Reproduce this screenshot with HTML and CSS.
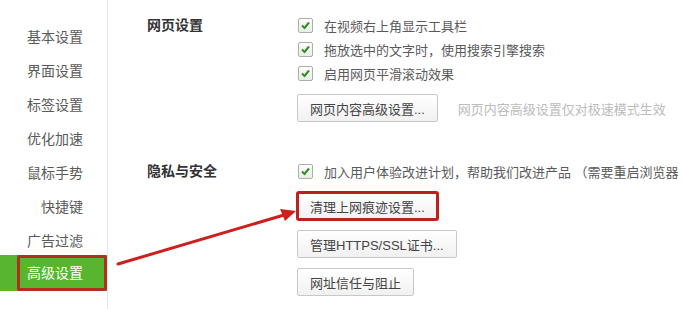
FILE: index.html
```html
<!DOCTYPE html>
<html lang="zh-CN">
<head>
    <meta charset="UTF-8">
    <title>高级设置</title>
    <link rel="stylesheet" href="styles.css">
</head>
<body>
    <div class="page">
        <ul class="sidebar">
            <li>基本设置</li>
            <li>界面设置</li>
            <li>标签设置</li>
            <li>优化加速</li>
            <li>鼠标手势</li>
            <li>快捷键</li>
            <li>广告过滤</li>
            <li class="active">高级设置</li>
        </ul>

        <div class="content">
            <div class="section">
                <div class="section-title">网页设置</div>
                <div class="section-body">
                    <label class="check-row"><span class="check"></span>在视频右上角显示工具栏</label>
                    <label class="check-row"><span class="check"></span>拖放选中的文字时，使用搜索引擎搜索</label>
                    <label class="check-row"><span class="check"></span>启用网页平滑滚动效果</label>
                    <div class="btn-line">
                        <button class="btn">网页内容高级设置...</button>
                        <span class="hint">网页内容高级设置仅对极速模式生效</span>
                    </div>
                </div>
            </div>

            <div class="section">
                <div class="section-title">隐私与安全</div>
                <div class="section-body">
                    <label class="check-row"><span class="check"></span>加入用户体验改进计划，帮助我们改进产品 （需要重启浏览器</label>
                    <div class="btn-line">
                        <button class="btn marked">清理上网痕迹设置...</button>
                    </div>
                    <div class="btn-line">
                        <button class="btn">管理HTTPS/SSL证书...</button>
                    </div>
                    <div class="btn-line">
                        <button class="btn">网址信任与阻止</button>
                    </div>
                </div>
            </div>
        </div>

        <!-- annotation arrow -->
        <svg class="arrow" width="683" height="309" viewBox="0 0 683 309">
            <line x1="118" y1="264" x2="284" y2="215" stroke="#cf1f1d" stroke-width="3" stroke-linecap="round"/>
            <polygon points="296,211 280,209 285,221" fill="#cf1f1d"/>
        </svg>
    </div>
</body>
</html>
```

FILE: styles.css
```css
html, body {
    margin: 0;
    padding: 0;
    background: #fff;
}
body {
    font-family: "Liberation Sans", "Noto Sans CJK SC", sans-serif;
    color: #555;
    overflow: hidden;
}
.page {
    position: relative;
    display: flex;
    width: 683px;
    height: 309px;
    overflow: hidden;
}
.sidebar {
    list-style: none;
    margin: 0;
    padding: 20px 0 0 0;
    width: 107px;
    flex-shrink: 0;
    border-right: 1px solid #e3e5e8;
    background: #fff;
}
.sidebar li {
    height: 34px;
    line-height: 34px;
    font-size: 14px;
    text-align: right;
    padding-right: 24px;
    color: #5a5a5a;
}
.sidebar li.active {
    position: relative;
    margin-top: -3px;
    height: 36px;
    line-height: 36px;
    background: #58b52f;
    color: #fff;
}
.sidebar li.active::after {
    content: "";
    position: absolute;
    left: 17px;
    right: 0;
    top: 0;
    bottom: 0;
    border: 3px solid #b0301c;
    border-radius: 2px;
}
.content {
    flex: 1;
    padding: 13px 0 0 39px;
    white-space: nowrap;
}
.section {
    display: flex;
    margin-bottom: 37px;
}
.section-title {
    width: 150px;
    flex-shrink: 0;
    font-size: 14px;
    font-weight: bold;
    line-height: 24px;
    color: #333;
}
.section-body {
    display: flex;
    flex-direction: column;
}
.check-row {
    display: flex;
    align-items: center;
    height: 24px;
    font-size: 13px;
    color: #5a5a5a;
}
.check {
    width: 13px;
    height: 13px;
    margin-left: 1px;
    margin-right: 11px;
    border: 1px solid #a9b0a6;
    border-radius: 2px;
    background-image: url("data:image/svg+xml,%3Csvg xmlns='http://www.w3.org/2000/svg' width='13' height='13'%3E%3Cpath d='M3 6.5 L5.5 9 L10 3.5' fill='none' stroke='%23358a2a' stroke-width='2'/%3E%3C/svg%3E"), linear-gradient(#fdfdfd, #e8ede6);
    flex-shrink: 0;
}
.btn-line {
    display: flex;
    align-items: center;
    margin-top: 9px;
}
.btn-line + .btn-line {
    margin-top: 10px;
}
.btn {
    height: 28px;
    padding: 0 12px;
    font-family: inherit;
    font-size: 13px;
    color: #444;
    background: linear-gradient(#ffffff, #f1f1f1);
    border: 1px solid #c8c8c8;
    border-radius: 2px;
}
.btn.marked {
    outline: 3px solid #b9221f;
    outline-offset: -2px;
}
.hint {
    margin-left: 20px;
    font-size: 13px;
    color: #bcbcbc;
}
.arrow {
    position: absolute;
    left: 0;
    top: 0;
    pointer-events: none;
}
```
